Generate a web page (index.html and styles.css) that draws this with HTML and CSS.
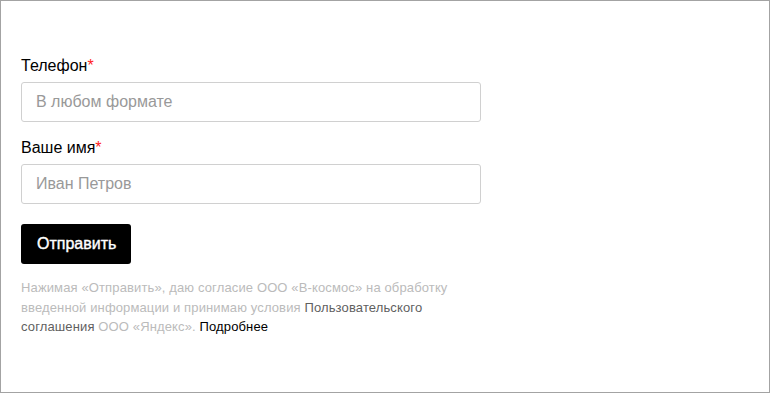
FILE: index.html
```html
<!DOCTYPE html>
<html>
<head>
    <title>Заявка</title>
    <link rel="stylesheet" href="styles.css">
</head>
<body>
    <div class="frame">
        <form class="form">
            <div class="form-group">
                <label for="phone">Телефон<span class="req">*</span></label>
                <input type="text" id="phone" name="phone" placeholder="В любом формате">
            </div>

            <div class="form-group">
                <label for="name">Ваше имя<span class="req">*</span></label>
                <input type="text" id="name" name="name" placeholder="Иван Петров">
            </div>

            <button type="submit">Отправить</button>

            <p class="agreement">
                Нажимая «Отправить», даю согласие ООО «В-космос» на обработку
                введенной информации и принимаю условия <a href="#" class="terms">Пользовательского
                соглашения</a> ООО «Яндекс». <a href="#" class="more">Подробнее</a>
            </p>
        </form>
    </div>
</body>
</html>
```

FILE: styles.css
```css
html, body {
    margin: 0;
    padding: 0;
    background: white;
}
body {
    font-family: "Liberation Sans", Arial, sans-serif;
    color: #000;
}
.frame {
    box-sizing: border-box;
    width: 770px;
    height: 393px;
    border: 1px solid #a3a3a3;
    padding: 55px 20px 0 20px;
}
.form {
    width: 460px;
}
.form-group {
    margin-bottom: 16px;
}
label {
    display: block;
    font-size: 16px;
    line-height: 20px;
    margin-bottom: 6px;
}
.req {
    color: #f22;
}
input {
    display: block;
    width: 100%;
    height: 40px;
    box-sizing: border-box;
    padding: 0 14px;
    border: 1px solid #d0d0d0;
    border-radius: 3px;
    font-family: inherit;
    font-size: 16px;
    color: #000;
    outline: none;
}
input::placeholder {
    color: #999;
}
button {
    display: block;
    margin-top: 20px;
    height: 40px;
    padding: 0 15px 0 16px;
    background-color: #000;
    color: white;
    border: none;
    border-radius: 3px;
    font-family: inherit;
    font-size: 16px;
    -webkit-text-stroke: 0.4px white;
    cursor: pointer;
}
.agreement {
    margin: 14px 0 0 0;
    font-size: 13px;
    line-height: 19.5px;
    letter-spacing: 0.13px;
    color: #bbb;
}
.agreement a {
    text-decoration: none;
}
.agreement .terms {
    color: #5f5f5f;
}
.agreement .more {
    color: #000;
}
```
